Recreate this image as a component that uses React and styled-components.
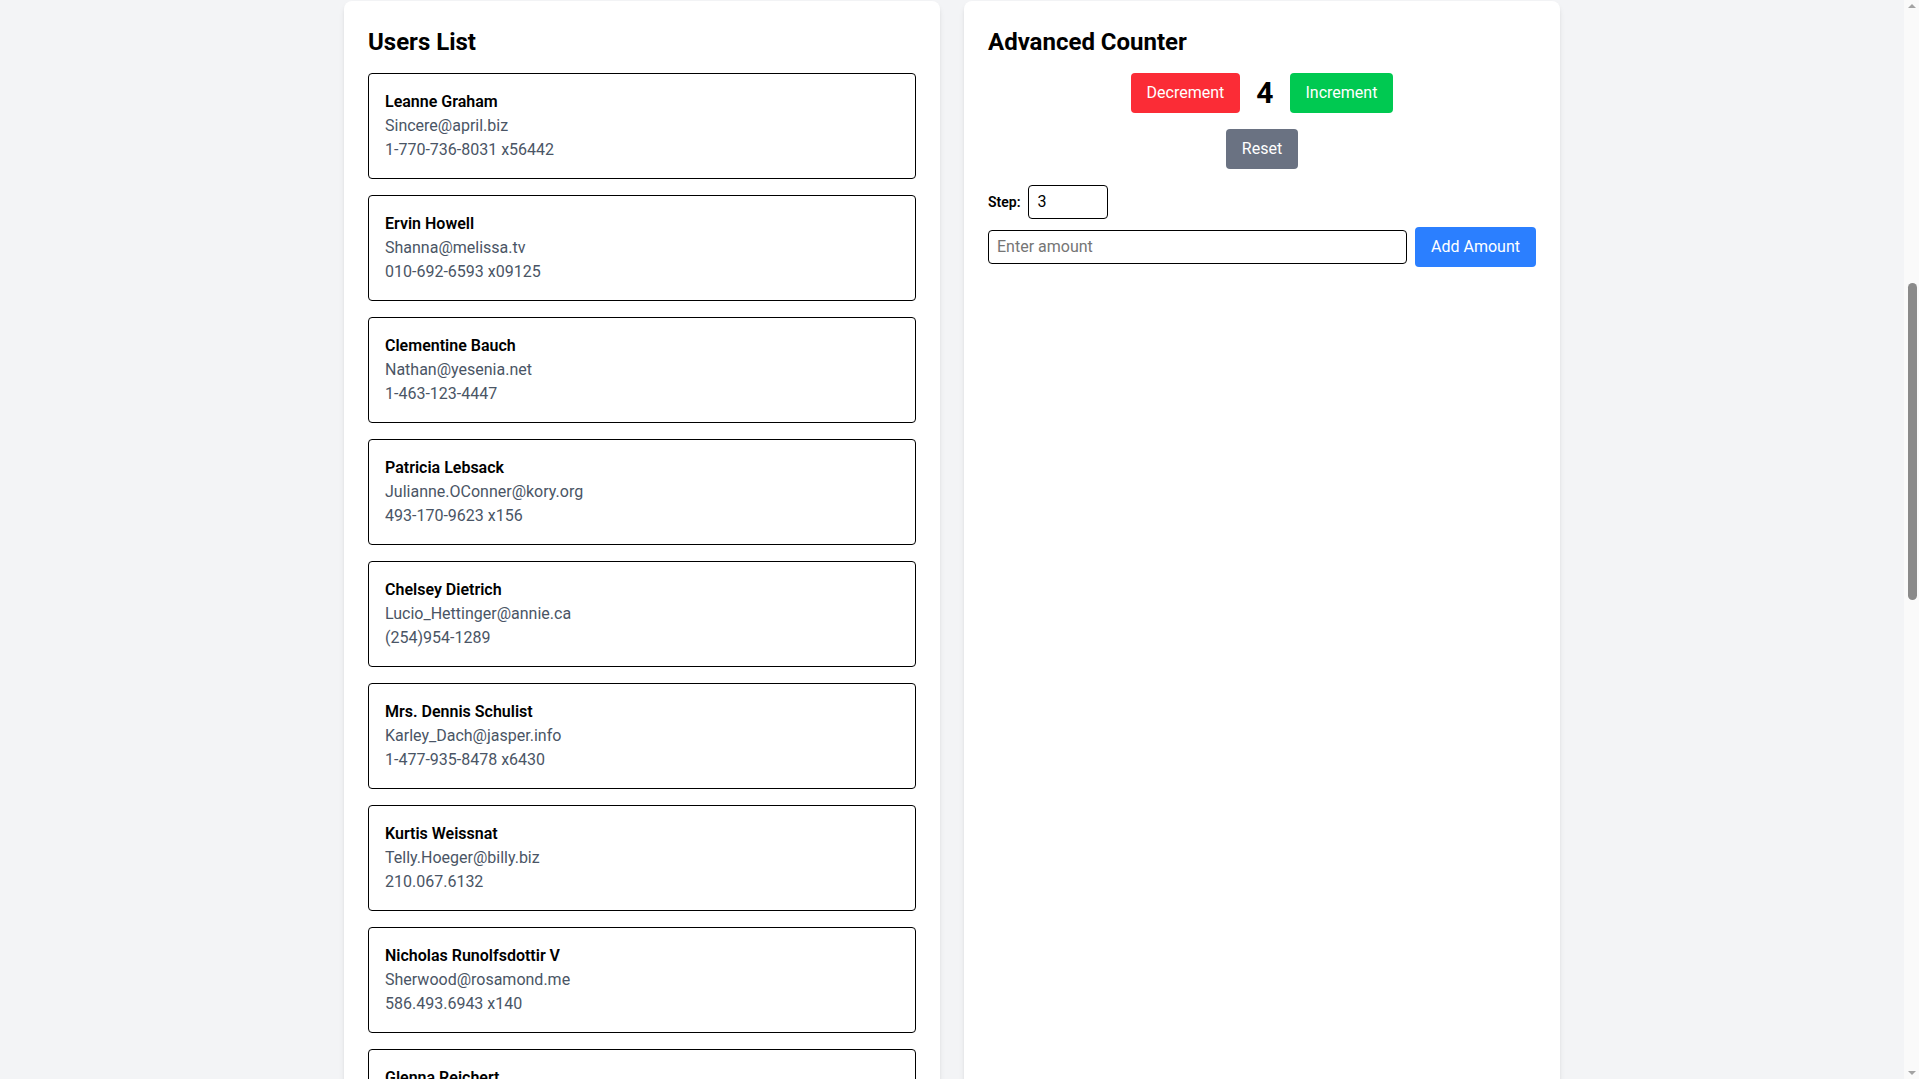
import React, { useState } from "react";
import styled, { createGlobalStyle } from "styled-components";

const GlobalStyle = createGlobalStyle`
  *, *::before, *::after { box-sizing: border-box; }
  html, body { margin: 0; padding: 0; }
  body {
    background: #f3f4f6;
    font-family: Roboto, "Liberation Sans", Arial, sans-serif;
    font-size: 16px;
    line-height: 24px;
    color: #000;
    padding-right: 15px;
  }
`;

const Page = styled.main`
  max-width: 1280px;
  margin: 0 auto;
  padding: 1px 32px 32px;
`;

const Columns = styled.div`
  display: grid;
  grid-template-columns: 1fr 1fr;
  gap: 24px;
`;

const Panel = styled.section`
  background: #fff;
  border-radius: 8px;
  padding: 24px;
  box-shadow: 0 4px 6px -1px rgba(0, 0, 0, 0.1), 0 2px 4px -2px rgba(0, 0, 0, 0.1);
`;

const Title = styled.h2`
  margin: 0 0 15px;
  padding-top: 1px;
  font-size: 24px;
  line-height: 32px;
  font-weight: 700;
`;

const UserStack = styled.ul`
  list-style: none;
  margin: 0;
  padding: 0;
  display: flex;
  flex-direction: column;
  gap: 16px;
`;

const UserCard = styled.li`
  border: 1px solid #000;
  border-radius: 4px;
  padding: 16px;
`;

const UserName = styled.p`
  margin: 0;
  font-weight: 600;
  color: #000;
`;

const UserDetail = styled.p`
  margin: 0;
  color: #4a5565;
`;

const CounterRow = styled.div`
  display: flex;
  justify-content: center;
  align-items: center;
  gap: 16px;
  margin-top: ${(p) => p.$mt || 0}px;
`;

const Button = styled.button`
  border: none;
  border-radius: 4px;
  padding: 8px 16px;
  font-family: inherit;
  font-size: 16px;
  line-height: 24px;
  color: #fff;
  cursor: pointer;
  background: ${(p) => p.$bg};
  flex-shrink: 0;
`;

const Count = styled.span`
  font-size: 30px;
  line-height: 36px;
  font-weight: 700;
`;

const FieldRow = styled.div`
  display: flex;
  align-items: center;
  gap: 8px;
  margin-top: ${(p) => p.$mt}px;
`;

const StepLabel = styled.label`
  font-size: 14px;
  line-height: 20px;
  font-weight: 600;
`;

const Input = styled.input`
  border: 1px solid #000;
  border-radius: 4px;
  padding: 4px 8px;
  font-family: inherit;
  font-size: 16px;
  line-height: 24px;
  color: #000;
  background: #fff;
  width: ${(p) => (p.$grow ? "auto" : "80px")};
  flex: ${(p) => (p.$grow ? "1 1 0" : "none")};
  min-width: 0;
  outline: none;
  &::placeholder { color: #757575; }
`;

/* window scrollbar, drawn over the right edge of the viewport */
const ScrollTrack = styled.div`
  position: fixed;
  top: 0;
  right: 0;
  bottom: 0;
  width: 15px;
  background: #fafafa;
  display: flex;
  flex-direction: column;
  justify-content: space-between;
  align-items: center;
  padding: 4px 0;
  pointer-events: none;
`;

const Arrow = styled.span`
  width: 0;
  height: 0;
  border-left: 4px solid transparent;
  border-right: 4px solid transparent;
  ${(p) => (p.$down ? "border-top: 4px solid #a3a3a3;" : "border-bottom: 4px solid #a3a3a3;")}
`;

const Thumb = styled.span`
  position: absolute;
  top: 283px;
  left: 4px;
  width: 9px;
  height: 317px;
  border-radius: 5px;
  background: #8a8a8a;
`;

const users = [
  { name: "Leanne Graham", email: "Sincere@april.biz", phone: "1-770-736-8031 x56442" },
  { name: "Ervin Howell", email: "Shanna@melissa.tv", phone: "010-692-6593 x09125" },
  { name: "Clementine Bauch", email: "Nathan@yesenia.net", phone: "1-463-123-4447" },
  { name: "Patricia Lebsack", email: "Julianne.OConner@kory.org", phone: "493-170-9623 x156" },
  { name: "Chelsey Dietrich", email: "Lucio_Hettinger@annie.ca", phone: "(254)954-1289" },
  { name: "Mrs. Dennis Schulist", email: "Karley_Dach@jasper.info", phone: "1-477-935-8478 x6430" },
  { name: "Kurtis Weissnat", email: "Telly.Hoeger@billy.biz", phone: "210.067.6132" },
  { name: "Nicholas Runolfsdottir V", email: "Sherwood@rosamond.me", phone: "586.493.6943 x140" },
  { name: "Glenna Reichert", email: "Chaim_McDermott@dana.io", phone: "(775)976-6794 x41206" },
  { name: "Clementina DuBuque", email: "Rey.Padberg@karina.biz", phone: "024-648-3804" },
];

export default function App() {
  const [count, setCount] = useState(4);
  const [step, setStep] = useState("3");
  const [amount, setAmount] = useState("");
  const s = Number(step) || 0;

  return (
    <>
      <GlobalStyle />
      <Page>
        <Columns>
          <Panel>
            <Title>Users List</Title>
            <UserStack>
              {users.map((u) => (
                <UserCard key={u.email}>
                  <UserName>{u.name}</UserName>
                  <UserDetail>{u.email}</UserDetail>
                  <UserDetail>{u.phone}</UserDetail>
                </UserCard>
              ))}
            </UserStack>
          </Panel>
          <Panel>
            <Title>Advanced Counter</Title>
            <CounterRow>
              <Button $bg="#fb2c36" onClick={() => setCount((c) => c - s)}>Decrement</Button>
              <Count>{count}</Count>
              <Button $bg="#00c951" onClick={() => setCount((c) => c + s)}>Increment</Button>
            </CounterRow>
            <CounterRow $mt={16}>
              <Button $bg="#6a7282" onClick={() => setCount(0)}>Reset</Button>
            </CounterRow>
            <FieldRow $mt={16}>
              <StepLabel htmlFor="step">Step:</StepLabel>
              <Input id="step" type="text" value={step} onChange={(e) => setStep(e.target.value)} />
            </FieldRow>
            <FieldRow $mt={8}>
              <Input
                $grow
                type="text"
                placeholder="Enter amount"
                value={amount}
                onChange={(e) => setAmount(e.target.value)}
              />
              <Button
                $bg="#2b7fff"
                onClick={() => {
                  setCount((c) => c + (Number(amount) || 0));
                  setAmount("");
                }}
              >
                Add Amount
              </Button>
            </FieldRow>
          </Panel>
        </Columns>
      </Page>
      <ScrollTrack aria-hidden="true">
        <Arrow />
        <Thumb />
        <Arrow $down />
      </ScrollTrack>
    </>
  );
}
